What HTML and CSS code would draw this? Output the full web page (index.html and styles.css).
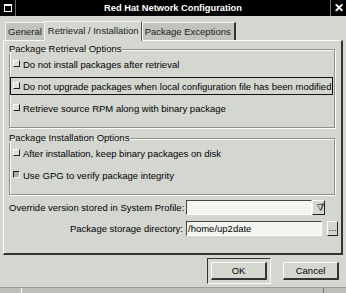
FILE: index.html
```html
<!DOCTYPE html>
<html lang="en">
<head>
    <meta charset="UTF-8">
    <title>Red Hat Network Configuration</title>
    <link rel="stylesheet" href="styles.css">
</head>
<body>
    <div class="window">
        <div class="titlebar">
            <div class="tb-icon"><span></span></div>
            <div class="tb-title">Red Hat Network Configuration</div>
            <div class="tb-close">&#x2715;</div>
        </div>

        <div class="tabs">
            <div class="tab">General</div>
            <div class="tab active">Retrieval / Installation</div>
            <div class="tab last">Package Exceptions</div>
        </div>

        <div class="notebook">
            <fieldset class="group">
                <legend>Package Retrieval Options</legend>
                <div class="check"><span class="box"></span>Do not install packages after retrieval</div>
                <div class="check focus"><span class="box"></span>Do not upgrade packages when local configuration file has been modified</div>
                <div class="check"><span class="box"></span>Retrieve source RPM along with binary package</div>
            </fieldset>

            <fieldset class="group second">
                <legend>Package Installation Options</legend>
                <div class="check"><span class="box"></span>After installation, keep binary packages on disk</div>
                <div class="check"><span class="box on"></span>Use GPG to verify package integrity</div>
            </fieldset>

            <div class="field">
                <label>Override version stored in System Profile:</label>
                <div class="entry short"></div>
                <div class="small-btn arrow">&#x25BD;/</div>
            </div>
            <div class="field">
                <label>Package storage directory:</label>
                <div class="entry">/home/up2date</div>
                <div class="small-btn dots">...</div>
            </div>
        </div>

        <div class="actions">
            <div class="default-frame"><div class="button">OK</div></div>
            <div class="button">Cancel</div>
        </div>

        <div class="statusbar">
            <span class="seg first"></span>
            <span class="seg mid"></span>
            <span class="seg"></span>
        </div>
    </div>
</body>
</html>
```

FILE: styles.css
```css
body {
    margin: 0;
    padding: 0;
    background: #d4d7d0;
    font-family: "Liberation Sans", Arial, sans-serif;
    font-size: 9.5px;
    color: #000;
    overflow: hidden;
}
.window {
    width: 346px;
    height: 293px;
    display: flex;
    flex-direction: column;
}

/* window manager title bar */
.titlebar {
    height: 16px;
    background: #000;
    display: flex;
    align-items: stretch;
}
.tb-icon {
    width: 15px;
    border-right: 1px solid #6c6c6c;
    display: flex;
    align-items: center;
    justify-content: center;
}
.tb-icon span {
    width: 6px;
    height: 5px;
    border: 1px solid #fff;
    border-top-width: 2px;
}
.tb-title {
    flex: 1;
    color: #fff;
    font-weight: bold;
    font-size: 9.3px;
    text-align: center;
    line-height: 16px;
}
.tb-close {
    width: 15px;
    border-left: 1px solid #6c6c6c;
    color: #fff;
    font-weight: bold;
    font-size: 12px;
    line-height: 16px;
    text-align: center;
}

/* notebook tabs */
.tabs {
    display: flex;
    align-items: flex-end;
    padding-left: 5px;
    height: 24px;
}
.tab {
    height: 17px;
    line-height: 18px;
    padding: 0 2px;
    background: #c1c4be;
    border-top: 1px solid #f4f4f4;
    border-left: 1px solid #f4f4f4;
    color: #1a1a1a;
}
.tab.active {
    height: 19px;
    line-height: 17px;
    background: #d4d7d0;
    padding: 0 2px 0 3px;
    border-right: 1px solid #555;
    margin-bottom: -1px;
    position: relative;
}
.tab.last {
    padding-right: 3px;
    border-right: 2px solid #333;
}

.notebook {
    margin: 0 3px;
    height: 209px;
    border-top: 1px solid #fafafa;
    border-left: 1px solid #fafafa;
    border-right: 2px solid #333;
    border-bottom: 2px solid #333;
    padding: 3px 6px 0 5px;
}

/* frames */
.group {
    margin: 0;
    padding: 1px 1px 10px 0;
    border: 1px solid #8e918b;
    box-shadow: inset 1px 1px 0 #fbfbfb, 1px 1px 0 #fbfbfb;
}
.group legend {
    padding: 0 1px;
    margin-left: -2px;
    line-height: 10px;
}
.group.second {
    margin-top: 5px;
}
.check {
    height: 16px;
    margin: 0 0 4px 0;
    display: flex;
    align-items: center;
    border: 1px solid transparent;
    white-space: nowrap;
}
.check:last-child {
    margin-bottom: 0;
}
.check.focus {
    border-color: #111;
}
.box {
    width: 5px;
    height: 5px;
    margin: 0 3px 1px 2px;
    background: #dcdfd8;
    border-top: 1px solid #fafafa;
    border-left: 1px solid #fafafa;
    border-right: 1px solid #222;
    border-bottom: 1px solid #222;
}
.box.on {
    background: #a9aca6;
    border-top-color: #222;
    border-left-color: #222;
    border-right-color: #fafafa;
    border-bottom-color: #fafafa;
}

/* entries */
.field {
    display: flex;
    align-items: center;
    margin-top: 5px;
    height: 15px;
}
.field + .field {
    margin-top: 6px;
}
.field label {
    flex: none;
    width: 174px;
    text-align: right;
    padding-right: 3px;
    white-space: nowrap;
}
.entry {
    flex: none;
    width: 136px;
    height: 15px;
    line-height: 14px;
    background: #f2f5f0;
    border-top: 1px solid #444;
    border-left: 1px solid #444;
    border-bottom: 1px solid #fff;
    border-right: 1px solid #fff;
    padding-left: 1px;
    box-sizing: border-box;
}
.entry.short {
    width: 126px;
}
.small-btn {
    flex: none;
    height: 15px;
    box-sizing: border-box;
    border-top: 1px solid #fafafa;
    border-left: 1px solid #fafafa;
    border-right: 1px solid #222;
    border-bottom: 1px solid #222;
    text-align: center;
    line-height: 12px;
}
.small-btn.arrow {
    width: 13px;
    font-size: 9px;
    letter-spacing: -3px;
}
.small-btn.dots {
    width: 11px;
    margin-left: 5px;
}

/* dialog buttons */
.actions {
    display: flex;
    justify-content: flex-end;
    align-items: center;
    height: 31px;
    padding-right: 7px;
    gap: 12px;
}
.default-frame {
    border-top: 1px solid #333;
    border-left: 1px solid #333;
    border-right: 1px solid #fafafa;
    border-bottom: 1px solid #fafafa;
    padding: 3px;
}
.button {
    width: 53px;
    height: 15px;
    line-height: 15px;
    text-align: center;
    border-top: 1px solid #fafafa;
    border-left: 1px solid #fafafa;
    border-right: 2px solid #333;
    border-bottom: 2px solid #333;
}

.statusbar {
    margin-top: auto;
    height: 5px;
    display: flex;
    background: #bcbfb9;
    border-top: 1px solid #9a9d97;
}
.seg {
    height: 100%;
}
.seg.first {
    width: 21px;
    border-right: 1px solid #fafafa;
}
.seg.mid {
    width: 301px;
    border-right: 1px solid #777;
}
```
